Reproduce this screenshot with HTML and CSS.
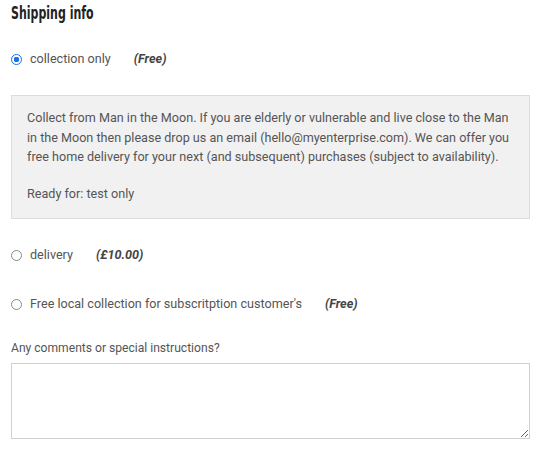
FILE: index.html
```html
<!DOCTYPE html>
<html>
<head>
<meta charset="utf-8">
<link rel="stylesheet" href="styles.css">
</head>
<body>
<div class="shipping">
  <h3 class="title">Shipping info</h3>
  <label class="option opt-first">
    <span class="radio checked"></span>
    <span class="name">collection only</span>
    <span class="price">(Free)</span>
  </label>
  <div class="note">
    <p>Collect from Man in the Moon. If you are elderly or vulnerable and live close to the Man in the Moon then please drop us an email (hello@myenterprise.com). We can offer you free home delivery for your next (and subsequent) purchases (subject to availability).</p>
    <p class="ready">Ready for: test only</p>
  </div>
  <label class="option opt-second">
    <span class="radio"></span>
    <span class="name">delivery</span>
    <span class="price">(£10.00)</span>
  </label>
  <label class="option opt-third">
    <span class="radio"></span>
    <span class="name">Free local collection for subscritption customer's</span>
    <span class="price">(Free)</span>
  </label>
  <label class="comments-label" for="comments">Any comments or special instructions?</label>
  <textarea id="comments" class="comments"></textarea>
</div>
</body>
</html>
```
FILE: styles.css
```css
html, body {
  margin: 0;
  padding: 0;
  background: #fff;
}
.shipping {
  width: 519px;
  padding-left: 11px;
  font-family: Roboto, "Liberation Sans", sans-serif;
  font-size: 12.6px;
  color: #555;
}
.title {
  margin: 3px 0 0;
  font-family: "DejaVu Sans", sans-serif;
  font-stretch: condensed;
  font-weight: bold;
  font-size: 17px;
  line-height: 20px;
  color: #222;
  transform: scaleX(0.72);
  transform-origin: left center;
  white-space: nowrap;
}
.option {
  display: flex;
  align-items: center;
  height: 20px;
  line-height: 20px;
}
.opt-first { margin-top: 26px; }
.opt-second { margin-top: 26px; }
.opt-third { margin-top: 29px; }
.radio {
  box-sizing: border-box;
  width: 11px;
  height: 11px;
  border: 1px solid #8a8a8a;
  border-radius: 50%;
  background: #fff;
  margin-right: 8px;
  flex: none;
}
.radio.checked {
  border-color: #1a73e8;
  background: radial-gradient(circle, #1a73e8 0 2.6px, #fff 3px);
}
.name {
  color: #555;
}
.price {
  margin-left: 23px;
  font-style: italic;
  font-weight: bold;
  color: #444;
}
.note {
  margin-top: 26px;
  box-sizing: border-box;
  height: 124px;
  border: 1px solid #dcdcdc;
  background: #f1f1f1;
  padding: 12px 15px 0;
  line-height: 19.5px;
}
.note p {
  margin: 0;
}
.note .ready {
  margin-top: 17.5px;
}
.comments-label {
  display: block;
  margin-top: 25px;
  font-size: 12.1px;
  line-height: 18px;
}
.comments {
  display: block;
  box-sizing: border-box;
  margin-top: 6px;
  width: 519px;
  height: 76px;
  border: 1px solid #d0d0d0;
  border-radius: 0;
  padding: 4px;
  resize: vertical;
  font-family: inherit;
}
```
